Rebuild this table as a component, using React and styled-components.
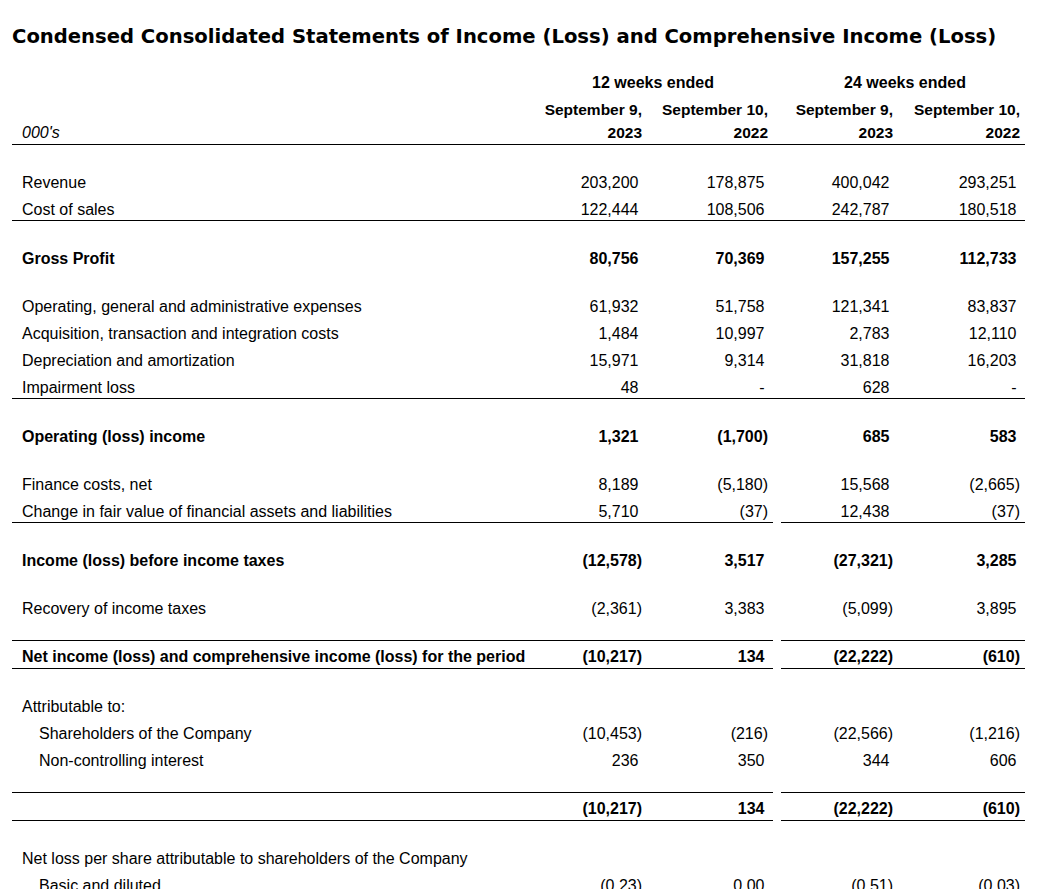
import React from "react";
import styled, { createGlobalStyle } from "styled-components";

const GlobalStyle = createGlobalStyle`
  html, body {
    margin: 0;
    padding: 0;
    background: #fff;
    color: #000;
  }
  body {
    font-family: "Liberation Sans", Arial, sans-serif;
  }
`;

// h = spacer height in px (border included); tall rows sit under a rule
const rows = [
  { type: "spacer", h: 22 },
  { type: "row", label: "Revenue", values: ["203,200", "178,875", "400,042", "293,251"] },
  { type: "row", label: "Cost of sales", values: ["122,444", "108,506", "242,787", "180,518"], line: "full" },
  { type: "spacer", h: 22 },
  { type: "row", label: "Gross Profit", values: ["80,756", "70,369", "157,255", "112,733"], bold: true },
  { type: "spacer", h: 21 },
  { type: "row", label: "Operating, general and administrative expenses", values: ["61,932", "51,758", "121,341", "83,837"] },
  { type: "row", label: "Acquisition, transaction and integration costs", values: ["1,484", "10,997", "2,783", "12,110"] },
  { type: "row", label: "Depreciation and amortization", values: ["15,971", "9,314", "31,818", "16,203"] },
  { type: "row", label: "Impairment loss", values: ["48", "-", "628", "-"], line: "full" },
  { type: "spacer", h: 22 },
  { type: "row", label: "Operating (loss) income", values: ["1,321", "(1,700)", "685", "583"], bold: true },
  { type: "spacer", h: 21 },
  { type: "row", label: "Finance costs, net", values: ["8,189", "(5,180)", "15,568", "(2,665)"] },
  { type: "row", label: "Change in fair value of financial assets and liabilities", values: ["5,710", "(37)", "12,438", "(37)"], line: "split" },
  { type: "spacer", h: 22 },
  { type: "row", label: "Income (loss) before income taxes", values: ["(12,578)", "3,517", "(27,321)", "3,285"], bold: true },
  { type: "spacer", h: 21 },
  { type: "row", label: "Recovery of income taxes", values: ["(2,361)", "3,383", "(5,099)", "3,895"] },
  { type: "spacer", h: 21, line: "split" },
  { type: "row", label: "Net income (loss) and comprehensive income (loss) for the period", values: ["(10,217)", "134", "(22,222)", "(610)"], bold: true, tall: true, line: "split" },
  { type: "spacer", h: 22 },
  { type: "row", label: "Attributable to:", values: ["", "", "", ""] },
  { type: "row", label: "Shareholders of the Company", values: ["(10,453)", "(216)", "(22,566)", "(1,216)"], indent: true },
  { type: "row", label: "Non-controlling interest", values: ["236", "350", "344", "606"], indent: true },
  { type: "spacer", h: 21, line: "split" },
  { type: "row", label: "", values: ["(10,217)", "134", "(22,222)", "(610)"], bold: true, tall: true, line: "split" },
  { type: "spacer", h: 22 },
  { type: "row", label: "Net loss per share attributable to shareholders of the Company", values: ["", "", "", ""] },
  { type: "row", label: "Basic and diluted", values: ["(0.23)", "0.00", "(0.51)", "(0.03)"], indent: true },
];

const Page = styled.div`
  padding: 0 20px 40px 12px;
`;

const Title = styled.h1`
  margin: 0;
  padding-top: 25px;
  height: 69px;
  box-sizing: border-box;
  font-family: "DejaVu Sans", Verdana, sans-serif;
  font-size: 19.6px;
  font-weight: bold;
  line-height: 24px;
  white-space: nowrap;
`;

const Table = styled.table`
  width: 1013px;
  table-layout: fixed;
  border-collapse: separate;
  border-spacing: 0;
  font-size: 16px;
`;

const Cell = styled.td`
  padding: ${(p) => (p.$spacer ? `${p.$h - 1}px 5px 0 0` : "5px 5px 0 0")};
  line-height: ${(p) => (p.$spacer ? "0" : p.$tall ? "22px" : "21px")};
  font-weight: ${(p) => (p.$bold ? "bold" : "normal")};
  text-align: right;
  vertical-align: top;
  white-space: nowrap;
  border-bottom: 1px solid ${(p) => (p.$line ? "#000" : "transparent")};
`;

const LabelCell = styled(Cell)`
  text-align: left;
  padding-right: 0;
  padding-left: ${(p) => (p.$indent ? "27px" : "10px")};
`;

const Num = styled.span`
  padding-right: ${(p) => (p.$paren ? "0" : "3.5px")};
`;

const GroupHead = styled.th`
  padding: 0 0 0 ${(p) => p.$shift}px;
  line-height: 27px;
  font-weight: bold;
  text-align: center;
  vertical-align: middle;
`;

const DateHead = styled.th`
  padding: 2px 5px 0 0;
  line-height: 23px;
  font-size: 15.5px;
  font-weight: bold;
  text-align: right;
  vertical-align: bottom;
  white-space: nowrap;
  border-bottom: 1px solid #000;
`;

const UnitHead = styled(DateHead)`
  padding: 2px 0 0 10px;
  font-size: 16px;
  font-style: italic;
  font-weight: normal;
  text-align: left;
`;

const GapHead = styled.th`
  padding: 0;
  border-bottom: 1px solid #000;
`;

function Row({ row }) {
  const spacer = row.type === "spacer";
  const line = !!row.line;
  const gapLine = row.line === "full";
  const vals = spacer ? ["", "", "", ""] : row.values;
  const common = { $spacer: spacer, $h: row.h, $tall: row.tall };
  const num = (v, i) => (
    <Cell key={i} $bold={row.bold} $line={line} {...common}>
      {v && <Num $paren={v.endsWith(")")}>{v}</Num>}
    </Cell>
  );
  return (
    <tr>
      <LabelCell $bold={row.bold} $indent={row.indent} $line={line} {...common}>
        {row.label}
      </LabelCell>
      {num(vals[0], 0)}
      {num(vals[1], 1)}
      <Cell $line={gapLine} {...common} />
      {num(vals[2], 2)}
      {num(vals[3], 3)}
    </tr>
  );
}

export default function App() {
  return (
    <Page>
      <GlobalStyle />
      <Title>Condensed Consolidated Statements of Income (Loss) and Comprehensive Income (Loss)</Title>
      <Table>
        <colgroup>
          <col style={{ width: 509 }} />
          <col style={{ width: 126 }} />
          <col style={{ width: 126 }} />
          <col style={{ width: 8 }} />
          <col style={{ width: 117 }} />
          <col style={{ width: 127 }} />
        </colgroup>
        <thead>
          <tr>
            <th />
            <GroupHead colSpan={2} $shift={12}>12 weeks ended</GroupHead>
            <th />
            <GroupHead colSpan={2} $shift={4}>24 weeks ended</GroupHead>
          </tr>
          <tr>
            <UnitHead>000's</UnitHead>
            <DateHead>September 9,<br />2023</DateHead>
            <DateHead>September 10,<br />2022</DateHead>
            <GapHead />
            <DateHead>September 9,<br />2023</DateHead>
            <DateHead>September 10,<br />2022</DateHead>
          </tr>
        </thead>
        <tbody>
          {rows.map((row, i) => (
            <Row key={i} row={row} />
          ))}
        </tbody>
      </Table>
    </Page>
  );
}
